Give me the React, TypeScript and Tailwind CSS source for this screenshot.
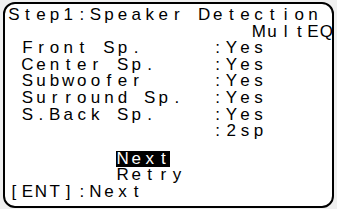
import React from "react";

const rows: { text: string; hl?: [number, number]; gap?: boolean }[] = [
  { text: "Step1:Speaker Detection" },
  { text: "                  MultEQ" },
  { text: " Front Sp.     :Yes" },
  { text: " Center Sp.    :Yes" },
  { text: " Subwoofer     :Yes" },
  { text: " Surround Sp.  :Yes" },
  { text: " S.Back Sp.    :Yes" },
  { text: "               :2sp" },
  { text: "        Next", hl: [8, 12], gap: true },
  { text: "        Retry" },
  { text: "[ENT]:Next" },
];

function Line({ text, hl, gap }: { text: string; hl?: [number, number]; gap?: boolean }) {
  return (
    <div className={"flex h-[16.6px] leading-[16.6px] whitespace-pre " + (gap ? "mt-[11px]" : "")}>
      {text.split("").map((c, i) => {
        const on = hl && i >= hl[0] && i < hl[1];
        return (
          <span
            key={i}
            className={
              "inline-block w-[13.6px] shrink-0 text-center " +
              (on ? "bg-black text-white" : "text-black")
            }
          >
            {c}
          </span>
        );
      })}
    </div>
  );
}

export default function App() {
  return (
    <div className="w-[337px] h-[209px] bg-[#f0f0f0] pt-[2px] pl-[3px] pr-[3px] pb-[1px]">
      <div
        className="h-full border-2 border-black rounded-[12px] bg-white pt-[3px] pl-[2px] text-[17px]"
        style={{ fontFamily: '"Liberation Sans", Arial, sans-serif' }}
      >
        {rows.map((r, i) => (
          <Line key={i} text={r.text} hl={r.hl} gap={r.gap} />
        ))}
      </div>
    </div>
  );
}
